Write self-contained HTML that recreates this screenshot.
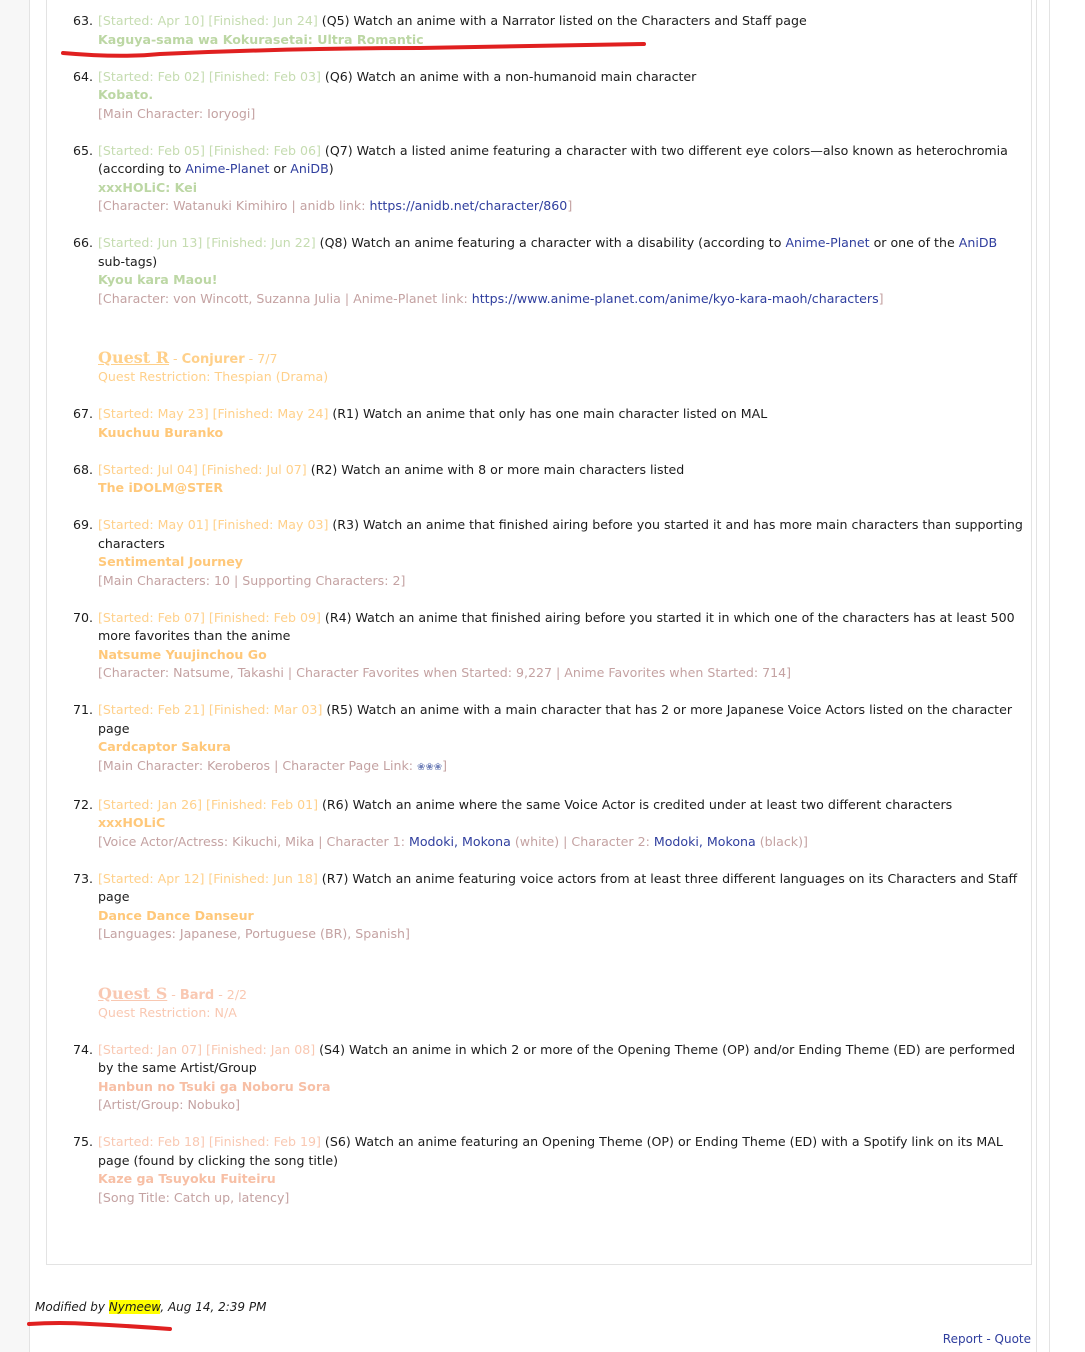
<!DOCTYPE html>
<html><head><meta charset="utf-8"><style>
body{margin:0;width:1085px;height:1352px;background:#fff;position:relative;overflow:hidden;font-family:"DejaVu Sans","Liberation Sans",sans-serif;font-size:12.6px;color:#1c1c1c}
.strip{position:absolute;left:0;top:0;width:29px;height:1352px;background:#f7f7f7;border-right:1px solid #e3e3e3}
.vl{position:absolute;top:0;width:1px;background:#e3e3e3}
.box{position:absolute;left:46px;top:-2px;width:984px;height:1266px;border:1px solid #e3e3e3;border-top:none}
.c{position:absolute;left:98px;top:12px;line-height:18.5px;white-space:nowrap}
.n{position:absolute;margin-left:-25px}
.g{color:#c5dcb0}.gb{color:#bcd7a4;font-weight:bold}
.o{color:#ffd08a}.ob{color:#ffc87a;font-weight:bold}
.p{color:#f9c8b2}.pb{color:#f7bfa5;font-weight:bold}
.nt{color:#c4a2a2}
a{color:#2f3e9e;text-decoration:none}
.qh{font-size:16px;font-weight:bold;text-decoration:underline;font-family:"DejaVu Serif","Liberation Serif",serif}
.qb{display:inline-block;height:23px;line-height:25px;vertical-align:top}
.foot{position:absolute;left:35px;top:1300px;font-style:italic;font-size:12px;color:#1c1c1c}
.hl{background:#ffff00}
.rq{position:absolute;right:54px;top:1332px;font-size:12px;color:#2f3e9e}
</style></head><body>
<div class="strip"></div>
<div class="vl" style="left:1036px;height:1352px"></div>
<div class="vl" style="left:1049px;height:1352px"></div>
<div class="box"></div>
<div class="c">
<span class="n">63.</span><span class="g">[Started: Apr 10] [Finished: Jun 24]</span> (Q5) Watch an anime with a Narrator listed on the Characters and Staff page<br>
<span class="gb">Kaguya-sama wa Kokurasetai: Ultra Romantic</span><br><br>
<span class="n">64.</span><span class="g">[Started: Feb 02] [Finished: Feb 03]</span> (Q6) Watch an anime with a non-humanoid main character<br>
<span class="gb">Kobato.</span><br>
<span class="nt">[Main Character: Ioryogi]</span><br><br>
<span class="n">65.</span><span class="g">[Started: Feb 05] [Finished: Feb 06]</span> (Q7) Watch a listed anime featuring a character with two different eye colors—also known as heterochromia<br>
(according to <a>Anime-Planet</a> or <a>AniDB</a>)<br>
<span class="gb">xxxHOLiC: Kei</span><br>
<span class="nt">[Character: Watanuki Kimihiro | anidb link: <a>https://anidb.net/character/860</a>]</span><br><br>
<span class="n">66.</span><span class="g">[Started: Jun 13] [Finished: Jun 22]</span> (Q8) Watch an anime featuring a character with a disability (according to <a>Anime-Planet</a> or one of the <a>AniDB</a><br>
sub-tags)<br>
<span class="gb">Kyou kara Maou!</span><br>
<span class="nt">[Character: von Wincott, Suzanna Julia | Anime-Planet link: <a>https://www.anime-planet.com/anime/kyo-kara-maoh/characters</a>]</span><br><br><br>
<span class="o qb"><span class="qh">Quest R</span> - <b style="font-size:13px">Conjurer</b> - 7/7</span><br>
<span class="o">Quest Restriction: Thespian (Drama)</span><br><br>
<span class="n">67.</span><span class="o">[Started: May 23] [Finished: May 24]</span> (R1) Watch an anime that only has one main character listed on MAL<br>
<span class="ob">Kuuchuu Buranko</span><br><br>
<span class="n">68.</span><span class="o">[Started: Jul 04] [Finished: Jul 07]</span> (R2) Watch an anime with 8 or more main characters listed<br>
<span class="ob">The iDOLM@STER</span><br><br>
<span class="n">69.</span><span class="o">[Started: May 01] [Finished: May 03]</span> (R3) Watch an anime that finished airing before you started it and has more main characters than supporting<br>
characters<br>
<span class="ob">Sentimental Journey</span><br>
<span class="nt">[Main Characters: 10 | Supporting Characters: 2]</span><br><br>
<span class="n">70.</span><span class="o">[Started: Feb 07] [Finished: Feb 09]</span> (R4) Watch an anime that finished airing before you started it in which one of the characters has at least 500<br>
more favorites than the anime<br>
<span class="ob">Natsume Yuujinchou Go</span><br>
<span class="nt">[Character: Natsume, Takashi | Character Favorites when Started: 9,227 | Anime Favorites when Started: 714]</span><br><br>
<span class="n">71.</span><span class="o">[Started: Feb 21] [Finished: Mar 03]</span> (R5) Watch an anime with a main character that has 2 or more Japanese Voice Actors listed on the character<br>
page<br>
<span class="ob">Cardcaptor Sakura</span><br>
<span class="nt">[Main Character: Keroberos | Character Page Link: <a style="font-size:10px;color:#7080b8">❀❀❀</a>]</span><br><br>
<span class="n">72.</span><span class="o">[Started: Jan 26] [Finished: Feb 01]</span> (R6) Watch an anime where the same Voice Actor is credited under at least two different characters<br>
<span class="ob">xxxHOLiC</span><br>
<span class="nt">[Voice Actor/Actress: Kikuchi, Mika | Character 1: <a>Modoki, Mokona</a> (white) | Character 2: <a>Modoki, Mokona</a> (black)]</span><br><br>
<span class="n">73.</span><span class="o">[Started: Apr 12] [Finished: Jun 18]</span> (R7) Watch an anime featuring voice actors from at least three different languages on its Characters and Staff<br>
page<br>
<span class="ob">Dance Dance Danseur</span><br>
<span class="nt">[Languages: Japanese, Portuguese (BR), Spanish]</span><br><br><br>
<span class="p qb"><span class="qh">Quest S</span> - <b style="font-size:13px">Bard</b> - 2/2</span><br>
<span class="p">Quest Restriction: N/A</span><br><br>
<span class="n">74.</span><span class="p">[Started: Jan 07] [Finished: Jan 08]</span> (S4) Watch an anime in which 2 or more of the Opening Theme (OP) and/or Ending Theme (ED) are performed<br>
by the same Artist/Group<br>
<span class="pb">Hanbun no Tsuki ga Noboru Sora</span><br>
<span class="nt">[Artist/Group: Nobuko]</span><br><br>
<span class="n">75.</span><span class="p">[Started: Feb 18] [Finished: Feb 19]</span> (S6) Watch an anime featuring an Opening Theme (OP) or Ending Theme (ED) with a Spotify link on its MAL<br>
page (found by clicking the song title)<br>
<span class="pb">Kaze ga Tsuyoku Fuiteiru</span><br>
<span class="nt">[Song Title: Catch up, latency]</span>
</div>
<div class="foot">Modified by <span class="hl">Nymeew</span>, Aug 14, 2:39 PM</div>
<div class="rq">Report - Quote</div>
<svg style="position:absolute;left:0;top:0" width="1085" height="1352">
<path d="M63 53 Q120 58 160 54 Q300 48 420 48 Q540 46 644 44" stroke="#e02020" stroke-width="4" fill="none" stroke-linecap="round"/>
<path d="M29 1324 Q60 1322 90 1324 Q130 1326 170 1329" stroke="#e02020" stroke-width="4" fill="none" stroke-linecap="round"/>
</svg>
</body></html>
